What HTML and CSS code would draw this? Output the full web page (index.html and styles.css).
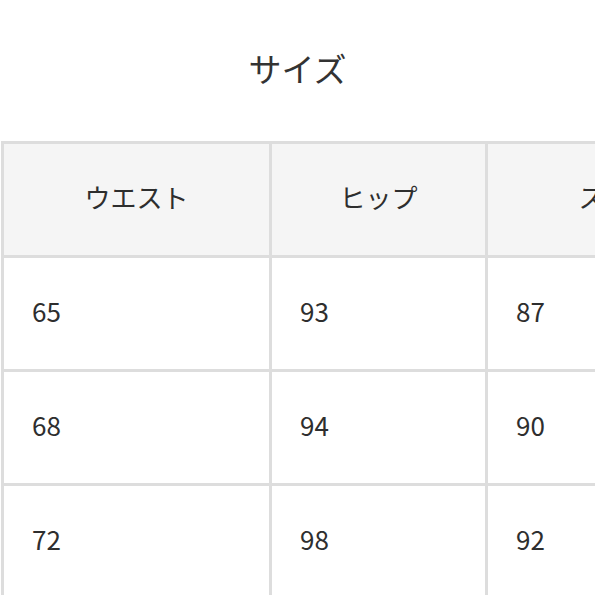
FILE: index.html
```html
<!DOCTYPE html>
<html lang="ja">
<head>
<meta charset="utf-8">
<link rel="stylesheet" href="styles.css">
</head>
<body>
<h1 class="title">サイズ</h1>
<div class="table">
  <div class="cell head">ウエスト</div>
  <div class="cell head">ヒップ</div>
  <div class="cell head">スカート丈</div>
  <div class="cell">65</div>
  <div class="cell">93</div>
  <div class="cell">87</div>
  <div class="cell">68</div>
  <div class="cell">94</div>
  <div class="cell">90</div>
  <div class="cell">72</div>
  <div class="cell">98</div>
  <div class="cell">92</div>
</div>
</body>
</html>
```
FILE: styles.css
```css
html, body {
  margin: 0;
  padding: 0;
  background: #fff;
  overflow: hidden;
}
body {
  width: 595px;
  height: 595px;
  font-family: "Noto Sans CJK JP", "Noto Sans", sans-serif;
  color: #333;
}
.title {
  margin: 0;
  padding-top: 48px;
  height: 40px;
  line-height: 40px;
  font-size: 33px;
  font-weight: 400;
  text-align: center;
  margin-bottom: 53px;
}
.table {
  display: grid;
  grid-template-columns: 268px 216px 314px;
  grid-auto-rows: 114px;
  width: max-content;
  margin-left: 1px;
  border-left: 3px solid #dddddd;
  border-top: 3px solid #dddddd;
}
.cell {
  box-sizing: border-box;
  border-right: 3px solid #dddddd;
  border-bottom: 3px solid #dddddd;
  display: flex;
  align-items: center;
  padding-left: 28px;
  padding-bottom: 6px;
  font-size: 26px;
  color: #2e2e2e;
}
.head {
  background: #f5f5f5;
  justify-content: center;
  padding-left: 0;
}
```
